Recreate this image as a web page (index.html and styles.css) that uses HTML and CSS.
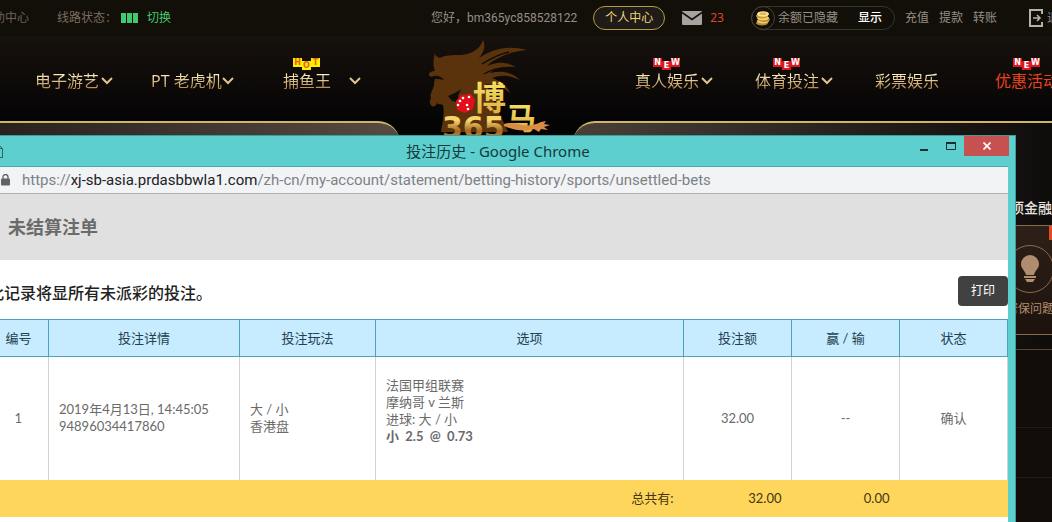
FILE: index.html
```html
<!DOCTYPE html>
<html lang="zh-CN">
<head>
<meta charset="utf-8">
<title>投注历史</title>
<link rel="stylesheet" href="styles.css">
</head>
<body>
<div class="site">
  <header class="topbar">
    <div class="top-left">
      <a class="help" href="#">帮助中心</a>
      <span class="line-label">线路状态：</span>
      <span class="signal"><i></i><i></i><i></i></span>
      <a class="switch" href="#">切换</a>
    </div>
    <div class="top-right">
      <span class="hello">您好，bm365yc858528122</span>
      <a class="center-pill" href="#">个人中心</a>
      <a class="mail" href="#">
        <svg width="20" height="14" viewBox="0 0 20 14"><rect width="20" height="14" rx="1" fill="#a5a29f"/><path d="M0 1.5l10 7 10-7" fill="none" stroke="#14100b" stroke-width="1.6"/></svg>
        <span>23</span>
      </a>
      <div class="balance">
        <span class="coin"><svg width="16" height="16" viewBox="0 0 16 16"><ellipse cx="7" cy="13" rx="6" ry="2.6" fill="#b98b34"/><ellipse cx="8" cy="11" rx="6" ry="2.6" fill="#f2cf6c"/><ellipse cx="9" cy="9.5" rx="6" ry="2.6" fill="#b98b34"/><ellipse cx="8" cy="8" rx="6" ry="2.6" fill="#f2cf6c"/><ellipse cx="7" cy="6" rx="6" ry="2.6" fill="#c89a3e"/><ellipse cx="8" cy="4" rx="6" ry="2.8" fill="#ffe595"/><ellipse cx="8" cy="3.8" rx="3.5" ry="1.3" fill="#e1b654"/></svg></span>
        <span>余额已隐藏</span>
        <button type="button" class="show">显示</button>
      </div>
      <nav class="quick"><a href="#">充值</a><a href="#">提款</a><a href="#">转账</a></nav>
      <a class="logout" href="#">
        <svg width="14" height="18" viewBox="0 0 14 18" fill="none" stroke="#b5b0a8" stroke-width="2"><path d="M13 5V1H1v16h12v-4"/><path d="M4 9h7M8 6l3 3-3 3" stroke-width="1.6"/></svg>
        <span>退出</span>
      </a>
    </div>
  </header>

  <nav class="mainnav">
    <a class="item" href="#"><span class="label">电子游艺</span><svg class="chev" viewBox="0 0 12 8"><path d="M1 1l5 5 5-5"/></svg></a>
    <a class="item item-pt" href="#"><span class="label">PT 老虎机</span><svg class="chev" viewBox="0 0 12 8"><path d="M1 1l5 5 5-5"/></svg></a>
    <a class="item item-fish" href="#"><span class="tag hot"><b>H</b><b>O</b><b>T</b></span><span class="label">捕鱼王</span><svg class="chev" viewBox="0 0 12 8"><path d="M1 1l5 5 5-5"/></svg></a>
    <a class="logo" href="#" aria-label="博马365">
      <svg width="150" height="105" viewBox="0 0 150 105">
        <defs>
          <linearGradient id="gold" x1="0" y1="0" x2="0" y2="1"><stop offset="0" stop-color="#fff06c"/><stop offset="1" stop-color="#d9a53a"/></linearGradient>
          <linearGradient id="bronze" x1="0" y1="0" x2="0" y2="1"><stop offset="0" stop-color="#f5d56a"/><stop offset=".3" stop-color="#f5d56a"/><stop offset=".6" stop-color="#a5651f"/><stop offset="1" stop-color="#f0b04a"/></linearGradient>
        </defs>
        <path fill="#5a330d" d="M14 18c2 3 3 4 6 5 5-3 12-3 21-3C52 19 60 14 63 5c3 6 1 12-4 18 14-9 29-13 48-8-13 1-24 5-34 11-3 2-4 3-6 5 9-4 18-5 29 1-9-1-15 0-22 3l-4 3c12-3 22-1 30 7-9-4-17-6-28-2 9 3 16 9 18 15-7-7-16-8-24-9l22 48H21c1-9 4-16 2-27-2-1-5 0-6-2-1 4-6 5-7 0-1-2 1-4 1-5-2-4 3-9 3-14 0-4 2-6 2-8-3 0-6 2-7-1 0-3 3-4 6-4-2-4-2-12 0-18z"/>
        <path fill="#120c07" d="M14 41c4-1 8 1 10 4-3-1-6-1-10-1zM28 61c4-2 10-4 13-7l-3 7 3 7-9-2z"/>
        <path fill="none" stroke="#120c07" stroke-width="1.3" d="M62 29c8-5 17-10 27-12M64 39c7-4 13-6 20-6"/>
        <path fill="#e10f1b" d="M36 66l5-6 10-1 4 6-2 9-8 4-8-3z"/>
        <g fill="#fff"><circle cx="40" cy="66" r="1.3"/><circle cx="38" cy="70" r="1.3"/><circle cx="43" cy="63" r="1.3"/><circle cx="49" cy="62" r="1.3"/><circle cx="47" cy="70" r="1.3"/><circle cx="48" cy="74" r="1.3"/></g>
        <text x="53" y="75" class="logo-cn" font-size="33" fill="url(#gold)">博</text>
        <text x="86" y="94" class="logo-cn" font-size="30" fill="url(#gold)">马</text>
        <text x="22" y="103" class="logo-num" font-size="30" fill="url(#bronze)">365</text>
        <path fill="#d88e42" d="M84 89c6-2 12-1 18 1 7 1 13 0 19-3l5-1-2 3 6 1-6 2 4 3-7-1-2 3-5-3c-10 3-20 1-30-3z"/>
      </svg>
    </a>
    <a class="item" href="#"><span class="tag new"><b>N</b><b>E</b><b>W</b></span><span class="label">真人娱乐</span><svg class="chev" viewBox="0 0 12 8"><path d="M1 1l5 5 5-5"/></svg></a>
    <a class="item" href="#"><span class="tag new"><b>N</b><b>E</b><b>W</b></span><span class="label">体育投注</span><svg class="chev" viewBox="0 0 12 8"><path d="M1 1l5 5 5-5"/></svg></a>
    <a class="item" href="#"><span class="label">彩票娱乐</span></a>
    <a class="item promo" href="#"><span class="tag new"><b>N</b><b>E</b><b>W</b></span><span class="label">优惠活动</span></a>
  </nav>

  <main class="stage">
    <div class="panel panel-left"></div>
    <div class="panel panel-right">
      <aside class="side">
        <h3>项金融</h3>
        <div class="card">
          <span class="corner"></span>
          <span class="ring"><svg width="20" height="28" viewBox="0 0 20 28" fill="#b18d70"><path d="M10 0a9 9 0 0 0-9 9c0 5 4 6 5 11h8c1-5 5-6 5-11a9 9 0 0 0-9-9z"/><rect x="4" y="21" width="12" height="2"/><path d="M5 24h10l-2 3H7z"/></svg></span>
          <span>密保问题</span>
        </div>
        <div class="rows"><i></i><i></i></div>
      </aside>
    </div>
  </main>
</div>

<section class="window">
  <div class="titlebar">
    <svg class="doc" width="10" height="13" viewBox="0 0 10 13" fill="none" stroke="#2c6664"><path d="M.5 .5h6l3 3v9h-9zM6.500 .5v3h3"/></svg>
    <span class="title">投注历史 - Google Chrome</span>
    <div class="controls">
      <button type="button" aria-label="最小化"><svg width="8" height="12" viewBox="0 0 8 12"><rect y="9" width="8" height="2" fill="#1c2f30"/></svg></button>
      <button type="button" aria-label="最大化"><svg width="10" height="8" viewBox="0 0 10 8"><path d="M.5 1.500h9v6h-9z" fill="none" stroke="#1c2f30"/><rect width="10" height="2" fill="#1c2f30"/></svg></button>
      <button type="button" class="close" aria-label="关闭"><svg width="8" height="8" viewBox="0 0 8 8"><path d="M.5 .5l7 7M7.500 .5l-7 7" stroke="#fff" stroke-width="1.700"/></svg></button>
    </div>
  </div>
  <div class="urlbar">
    <svg width="9" height="12" viewBox="0 0 9 12"><rect y="4.500" width="9" height="7" rx="1" fill="#5f6368"/><path d="M2 5V3a2.500 2.500 0 0 1 5 0v2" fill="none" stroke="#5f6368" stroke-width="1.300"/></svg>
    <span class="url">https://<b>xj-sb-asia.prdasbbwla1.com</b>/zh-cn/my-account/statement/betting-history/sports/unsettled-bets</span>
  </div>
  <div class="content">
    <h1>未结算注单</h1>
    <div class="intro">
      <p>此记录将显所有未派彩的投注。</p>
      <button type="button" class="print">打印</button>
    </div>
    <table class="bets">
      <colgroup><col class="c-no"><col class="c-detail"><col class="c-type"><col><col class="c-num"><col class="c-num"><col class="c-num"></colgroup>
      <thead>
        <tr><th>编号</th><th>投注详情</th><th>投注玩法</th><th>选项</th><th>投注额</th><th>赢 / 输</th><th>状态</th></tr>
      </thead>
      <tbody>
        <tr>
          <td class="mid">1</td>
          <td>2019年4月13日, 14:45:05<br>94896034417860</td>
          <td>大 / 小<br>香港盘</td>
          <td class="pick">法国甲组联赛<br>摩纳哥 v 兰斯<br>进球: 大 / 小<br><b>小&nbsp; 2.5&nbsp; @&nbsp; 0.73</b></td>
          <td class="mid">32.00</td>
          <td class="mid">--</td>
          <td class="mid">确认</td>
        </tr>
      </tbody>
      <tfoot>
        <tr><td colspan="4">总共有:</td><td>32.00</td><td>0.00</td><td></td></tr>
      </tfoot>
    </table>
  </div>
</section>
</body>
</html>
```
FILE: styles.css
```css
* { box-sizing: border-box; }
html, body { height: 100%; margin: 0; }
body {
  position: relative;
  overflow: hidden;
  background: #0c0a08;
  font: 12px/20px "Noto Sans", "Noto Sans CJK SC", sans-serif;
}
a { color: inherit; text-decoration: none; }
button { font: inherit; border: 0; margin: 0; padding: 0; background: none; color: inherit; }
svg { display: block; flex: none; }

.site { display: flex; flex-direction: column; height: 100%; overflow: hidden; }

/* Top bar */
.topbar {
  display: flex;
  flex: none;
  justify-content: space-between;
  height: 36px;
  margin: 0 -19px;
  background: #120e08;
  color: #968f86;
  white-space: nowrap;
}
.top-left, .top-right { display: flex; align-items: center; }
.help { color: #6c6257; }
.line-label { margin-left: 28px; color: #7a6d5f; }
.signal { display: flex; gap: 1px; margin-left: 4px; }
.signal i { width: 5px; height: 10px; background: #43c96f; }
.switch { margin-left: 9px; color: #43c96f; }
.hello { font-family: Roboto, "Noto Sans CJK SC", sans-serif; }
.center-pill {
  margin-left: 16px;
  padding: 1px 11px;
  border: 1px solid #b39a45;
  border-radius: 12px;
  background: #1f1b18;
  color: #efd573;
}
.mail { display: flex; align-items: center; gap: 8px; margin-left: 17px; color: #d8472b; }
.balance {
  display: flex;
  align-items: center;
  height: 24px;
  margin-left: 27px;
  padding-right: 12px;
  border: 1px solid #37332f;
  border-radius: 12px;
}
.coin {
  display: grid;
  place-items: center;
  width: 24px;
  height: 24px;
  margin: 0 3px 0 -1px;
  border: 1px solid #4a4031;
  border-radius: 50%;
}
.show { margin-left: 20px; color: #fff; font-weight: 500; }
.quick { display: flex; gap: 10px; margin-left: 10px; }
.logout { display: flex; align-items: center; gap: 4px; margin-left: 32px; }

/* Main navigation */
.mainnav {
  display: flex;
  flex: none;
  height: 85px;
  padding-left: 14px;
  background: linear-gradient(#17110d, #050405);
  white-space: nowrap;
}
.item {
  position: relative;
  display: flex;
  flex: none;
  align-items: center;
  gap: 2px;
  width: 120px;
  padding: 4px 0 0 21px;
  font-size: 16px;
  line-height: 24px;
}
.item-pt { padding-left: 17px; gap: 0; }
.item-fish { padding-left: 29px; gap: 18px; }
.label {
  background: linear-gradient(#fff3c4 20%, #b98e4e 80%);
  background-clip: text;
  -webkit-background-clip: text;
  color: transparent;
}
.promo .label { background: none; color: #e8431f; }
.chev { width: 12px; height: 8px; fill: none; stroke: #e0c58c; stroke-width: 2; }
.tag { position: absolute; top: 22px; left: 39px; display: flex; }
.tag b {
  width: 9px;
  height: 9px;
  font: bold 8px/9px "DejaVu Sans", sans-serif;
  text-align: center;
}
.tag b:nth-child(2) { margin-top: 3px; }
.new b { background: #dc1822; color: #fff; }
.hot b { background: #ffee00; color: #e2641a; }
.logo { flex: none; width: 240px; padding-left: 46px; }
.logo svg { position: relative; z-index: 1; margin-top: -1px; }
.logo-cn { font-family: "Noto Sans CJK SC", sans-serif; font-weight: 700; }
.logo-num { font-family: "DejaVu Sans", sans-serif; font-weight: 700; }

/* Stage behind the popup */
.stage { display: flex; flex: 1; gap: 173px; min-height: 0; background: #050405; }
.panel { border-top: 2px solid #cdb766; }
.panel-left { width: 400px; border-radius: 0 22px 0 0; background: linear-gradient(90deg, #2a211d, #574a42); }
.panel-right {
  display: flex;
  flex: 1;
  justify-content: flex-end;
  border-radius: 22px 0 0 0;
  background: linear-gradient(90deg, #4a4038, #191512 80%, #0f0d0c);
}
.side { display: flex; flex-direction: column; width: 46px; padding-top: 75px; color: #b18d70; }
.side h3 { margin: 0 0 7px 4px; font-size: 14px; line-height: 20px; font-weight: 500; color: #e8e4e0; white-space: nowrap; }
.card {
  position: relative;
  display: flex;
  flex: none;
  flex-direction: column;
  align-items: center;
  gap: 6px;
  width: 48px;
  height: 110px;
  padding-top: 19px;
  border: solid #8b6a4c;
  border-width: 1px 0;
  background: linear-gradient(#2d2019, #1d120c);
  white-space: nowrap;
}
.corner { position: absolute; top: 0; right: 0; width: 5px; height: 14px; background: #e8481e; }
.ring { display: grid; place-items: center; width: 48px; height: 48px; border: 1px solid #8b6a4c; border-radius: 50%; }
.rows { flex: 1; margin-top: 14px; border-top: 1px solid #59442f; background: #120d0a; }
.rows i { display: block; height: 78px; border-bottom: 1px solid #221c18; }
.rows i + i { height: 50px; }

/* Popup browser window */
.window {
  position: absolute;
  z-index: 2;
  inset: 135px 36px 0 -20px;
  display: flex;
  flex-direction: column;
  padding: 0 7px;
  border: 1px solid #3e9d9b;
  border-bottom: 0;
  background: #5ccfce;
}
.titlebar { display: grid; grid-template-columns: 1fr auto 1fr; align-items: center; height: 30px; color: #16393b; }
.doc { margin-left: 5px; }
.title { font-size: 15px; line-height: 20px; }
.controls { display: flex; justify-content: flex-end; align-self: start; margin-right: -1px; }
.controls button { display: grid; place-items: center; width: 27px; height: 20px; }
.controls .close { width: 45px; background: #c75050; }
.urlbar {
  display: flex;
  align-items: center;
  gap: 12px;
  height: 28px;
  padding-left: 13px;
  border-top: 1px solid #4fa9a8;
  border-bottom: 1px solid #b0b2b5;
  background: #f1f3f5;
  color: #7d8287;
  font: 15px/20px Roboto, sans-serif;
  white-space: nowrap;
}
.url b { font-weight: 400; color: #202124; }
.content { flex: 1; background: #fff; }
.content h1 { margin: 0; padding: 20px; background: #e0e0e0; color: #6b6b6b; font-size: 18px; line-height: 26px; font-weight: 700; }
.intro { display: flex; justify-content: space-between; align-items: flex-start; padding: 16px 0 13px; }
.intro p { margin: 5px 0 0; font-size: 16px; line-height: 24px; font-weight: 500; color: #222; }
.print { width: 50px; height: 30px; border-radius: 4px; background: #414141; color: #fff; }

.bets {
  width: 100%;
  table-layout: fixed;
  border-collapse: collapse;
  font: 13px/17px Lato, "Noto Sans CJK SC", sans-serif;
  color: #6a6a6a;
}
.c-no { width: 60px; }
.c-detail { width: 191px; }
.c-type { width: 136px; }
.c-num { width: 108px; }
.bets th { height: 37px; padding: 0; border: 1px solid #4aa3bf; background: #c7ecff; color: #24404f; font-weight: 400; }
.bets tbody td { height: 123px; padding: 0 10px; border-right: 1px solid #d2d2d2; }
.bets .mid { text-align: center; }
.bets tbody .pick { padding-bottom: 14px; }
.bets tfoot td { height: 37px; padding: 0 10px; background: #ffd65c; color: #443711; text-align: right; }
```
